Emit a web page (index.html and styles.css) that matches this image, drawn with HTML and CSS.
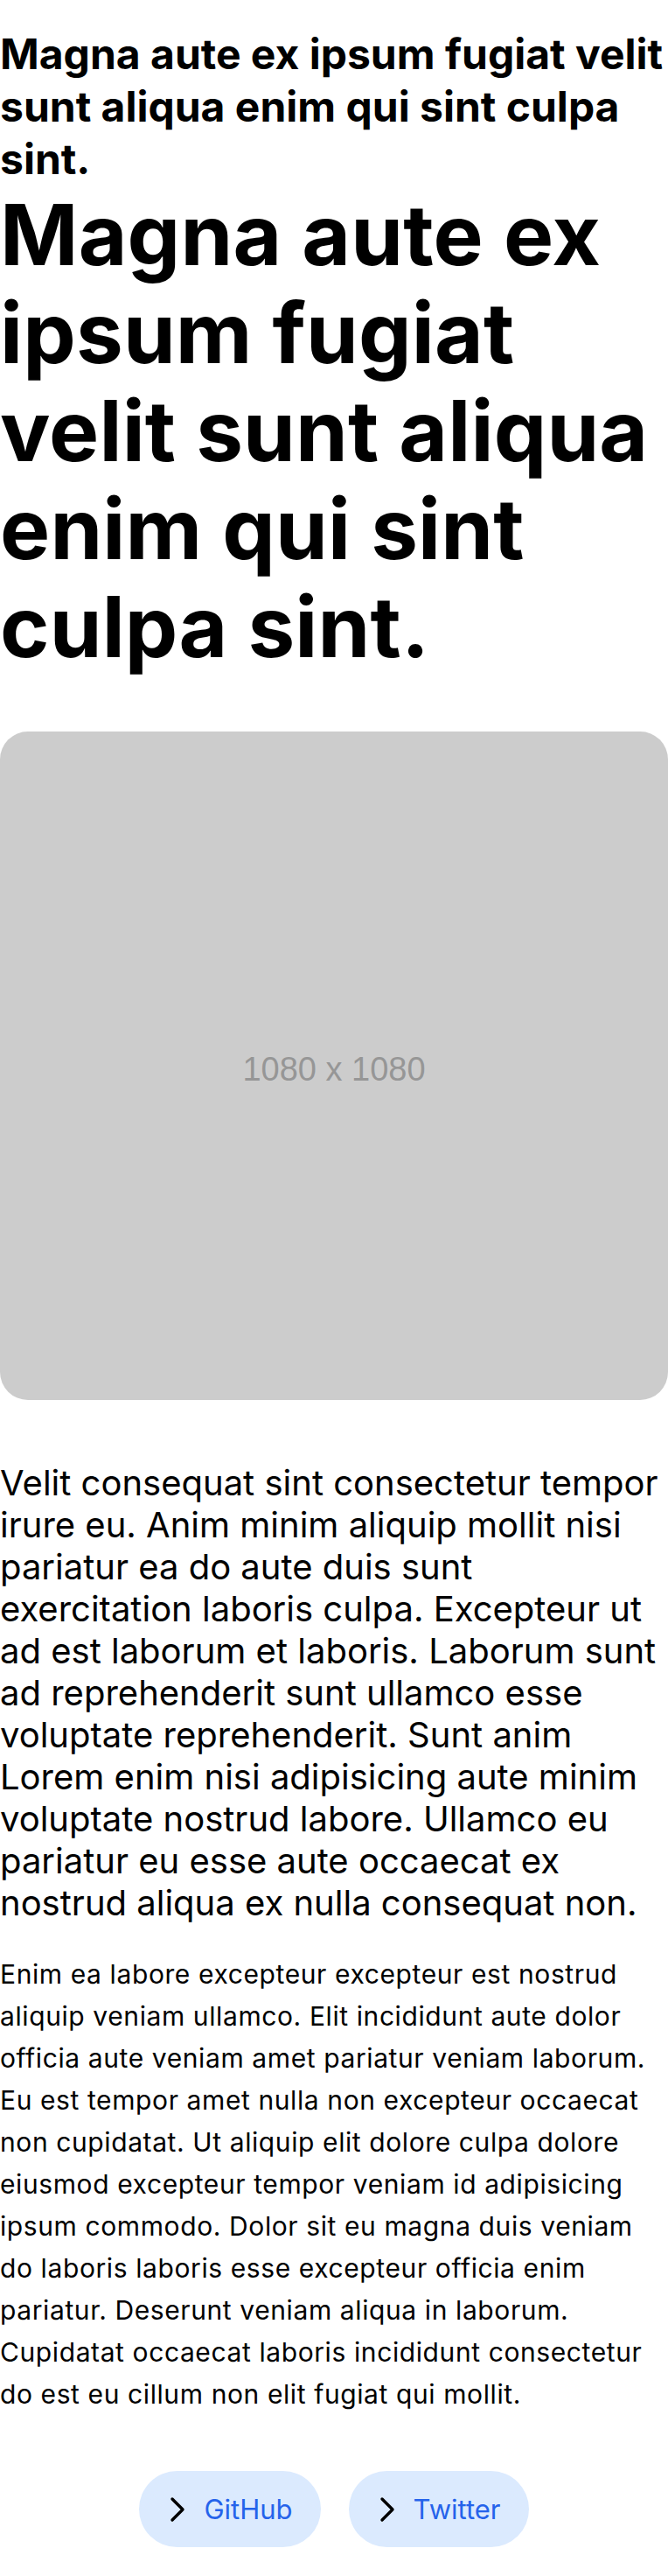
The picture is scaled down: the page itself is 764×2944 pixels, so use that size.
FILE: index.html
```html
<!DOCTYPE html>
<html lang="en">
<head>
<meta charset="utf-8">
<title>Magna aute ex ipsum</title>
<link rel="stylesheet" href="styles.css">
</head>
<body>
<main class="page">
  <h1 class="title-sm">Magna aute ex ipsum fugiat velit sunt aliqua enim qui sint culpa sint.</h1>
  <h2 class="title-lg">Magna aute ex ipsum fugiat velit sunt aliqua enim qui sint culpa sint.</h2>
  <div class="placeholder"><span>1080 x 1080</span></div>
  <p class="lead">Velit consequat sint consectetur tempor irure eu. Anim minim aliquip mollit nisi pariatur ea do aute duis sunt exercitation laboris culpa. Excepteur ut ad est laborum et laboris. Laborum sunt ad reprehenderit sunt ullamco esse voluptate reprehenderit. Sunt anim Lorem enim nisi adipisicing aute minim voluptate nostrud labore. Ullamco eu pariatur eu esse aute occaecat ex nostrud aliqua ex nulla consequat non.</p>
  <p class="body">Enim ea labore excepteur excepteur est nostrud aliquip veniam ullamco. Elit incididunt aute dolor officia aute veniam amet pariatur veniam laborum. Eu est tempor amet nulla non excepteur occaecat non cupidatat. Ut aliquip elit dolore culpa dolore eiusmod excepteur tempor veniam id adipisicing ipsum commodo. Dolor sit eu magna duis veniam do laboris laboris esse excepteur officia enim pariatur. Deserunt veniam aliqua in laborum. Cupidatat occaecat laboris incididunt consectetur do est eu cillum non elit fugiat qui mollit.</p>
  <nav class="links">
    <a class="pill" href="#"><svg class="chev" width="12" height="24" viewBox="9 6 6 12" aria-hidden="true"><path d="m9 18 6-6-6-6"/></svg><span>GitHub</span></a>
    <a class="pill" href="#"><svg class="chev" width="12" height="24" viewBox="9 6 6 12" aria-hidden="true"><path d="m9 18 6-6-6-6"/></svg><span>Twitter</span></a>
  </nav>
</main>
</body>
</html>
```

FILE: styles.css
```css
* { box-sizing: border-box; }
html, body { margin: 0; padding: 0; background: #ffffff; }
body {
  font-family: "Inter", "Noto Sans", sans-serif;
  color: #000000;
}
.page {
  width: 764px;
  padding: 32px 0 33px;
  display: flex;
  flex-direction: column;
}
.title-sm {
  margin: 0;
  font-size: 48px;
  line-height: 60px;
  font-weight: 700;
  letter-spacing: 0;
}
.title-lg {
  margin: 0;
  font-size: 96px;
  line-height: 112px;
  font-weight: 700;
  letter-spacing: 0.2px;
}
.placeholder {
  margin-top: 64px;
  width: 764px;
  height: 764px;
  border-radius: 32px;
  background: #cccccc;
  display: flex;
  align-items: center;
  justify-content: center;
}
.placeholder span {
  font-family: "Liberation Sans", Arial, sans-serif;
  font-size: 38px;
  color: #969696;
  transform: translateY(4px);
}
.lead {
  margin: 71px 0 0;
  font-size: 40px;
  line-height: 48px;
}
.body {
  margin: 33px 0 0;
  font-size: 30px;
  line-height: 48px;
  letter-spacing: 0.6px;
}
.links {
  margin-top: 64px;
  display: flex;
  justify-content: center;
  gap: 32px;
}
.pill {
  display: flex;
  align-items: center;
  gap: 24px;
  height: 87px;
  padding: 0 32px 0 38px;
  border-radius: 44px;
  background: #dbeafe;
  color: #2563eb;
  text-decoration: none;
  font-size: 31px;
  line-height: 40px;
}
.chev {
  overflow: visible;
  fill: none;
  stroke: #000000;
  stroke-width: 1.7;
  stroke-linecap: round;
  stroke-linejoin: round;
  flex: none;
}
```
